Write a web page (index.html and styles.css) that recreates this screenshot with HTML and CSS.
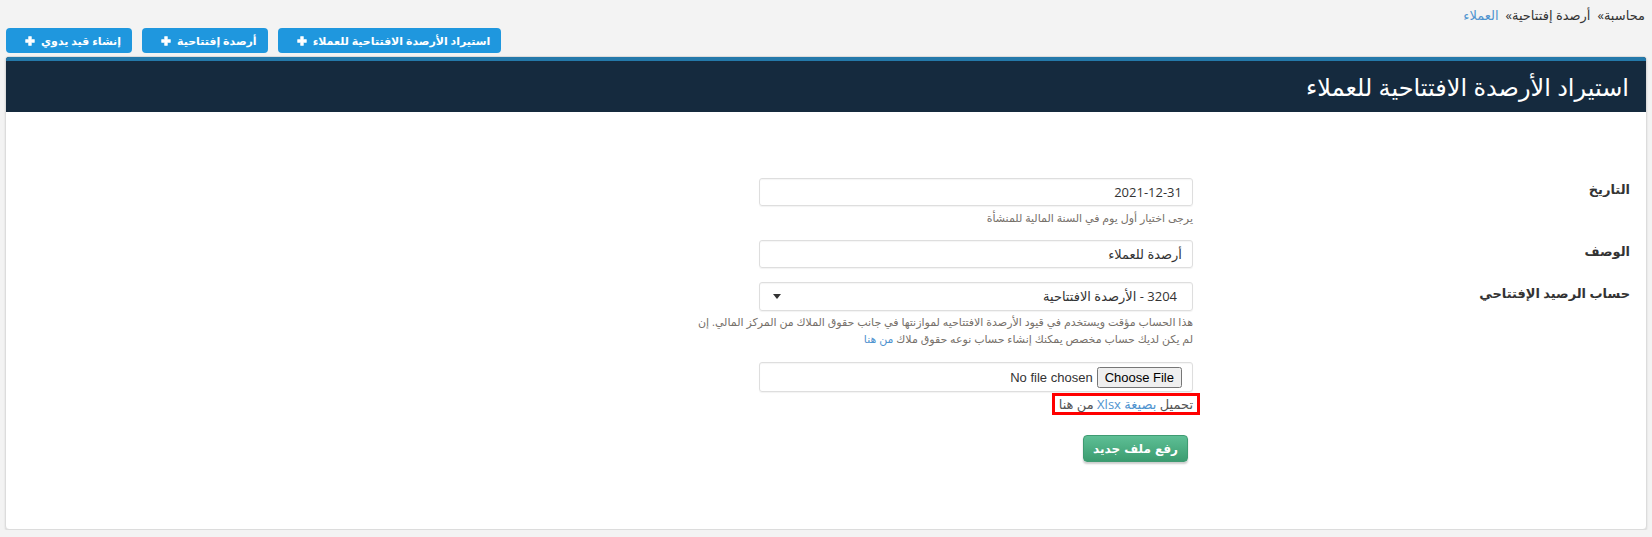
FILE: index.html
```html
<!DOCTYPE html>
<html lang="ar" dir="rtl">
<head>
<meta charset="utf-8">
<title>استيراد الأرصدة الافتتاحية للعملاء</title>
<link rel="stylesheet" href="styles.css">
</head>
<body>
<div class="breadcrumb">
  <span class="crumb">محاسبة»</span>
  <span class="crumb">أرصدة إفتتاحية»</span>
  <a class="crumb link" href="#">العملاء</a>
</div>
<div class="actions">
  <a class="btn-blue" href="#">استيراد الأرصدة الافتتاحية للعملاء <svg class="plus" viewBox="0 0 10 10"><path d="M3.6 0.6h2.8v3h3v2.8h-3v3h-2.8v-3h-3v-2.8h3z" fill="#fff" stroke="#fff" stroke-width="0.6" stroke-linejoin="round"/></svg></a>
  <a class="btn-blue" href="#">أرصدة إفتتاحية <svg class="plus" viewBox="0 0 10 10"><path d="M3.6 0.6h2.8v3h3v2.8h-3v3h-2.8v-3h-3v-2.8h3z" fill="#fff" stroke="#fff" stroke-width="0.6" stroke-linejoin="round"/></svg></a>
  <a class="btn-blue" href="#">إنشاء قيد يدوي <svg class="plus" viewBox="0 0 10 10"><path d="M3.6 0.6h2.8v3h3v2.8h-3v3h-2.8v-3h-3v-2.8h3z" fill="#fff" stroke="#fff" stroke-width="0.6" stroke-linejoin="round"/></svg></a>
</div>
<div class="panel">
  <div class="panel-head">
    <h1 class="panel-title">استيراد الأرصدة الافتتاحية للعملاء</h1>
  </div>
  <div class="panel-body">
    <div class="row row-date">
      <label class="lbl">التاريخ</label>
      <div class="field">
        <div class="input">2021-12-31</div>
        <div class="help">يرجى اختيار أول يوم في السنة المالية للمنشأة</div>
      </div>
    </div>
    <div class="row row-desc">
      <label class="lbl">الوصف</label>
      <div class="field">
        <div class="input">أرصدة للعملاء</div>
      </div>
    </div>
    <div class="row row-acc">
      <label class="lbl">حساب الرصيد الإفتتاحي</label>
      <div class="field">
        <div class="input select"><span>3204 - الأرصدة الافتتاحية</span><span class="caret"></span></div>
        <div class="help help2">هذا الحساب مؤقت ويستخدم في قيود الأرصدة الافتتاحيه لموازنتها في جانب حقوق الملاك من المركز المالي. إن<br>لم يكن لديك حساب مخصص يمكنك إنشاء حساب نوعه حقوق ملاك <a class="link" href="#">من هنا</a></div>
      </div>
    </div>
    <div class="row row-file">
      <div class="field offset">
        <div class="input file"><input type="file" class="file-input"></div>
        <div class="dl"><span class="dl-box">تحميل <a class="link" href="#">بصيغة Xlsx</a> من هنا</span></div>
        <div class="submit-wrap"><button class="btn-green" type="button">رفع ملف جديد</button></div>
      </div>
    </div>
  </div>
</div>
</body>
</html>
```
FILE: styles.css
```css
html { direction: rtl; }
body {
  margin: 0;
  background: #f3f3f3;
  font-family: "Open Sans", "DejaVu Sans", sans-serif;
  color: #333;
  font-size: 13px;
}
a { text-decoration: none; }
.link { color: #4f93cf; }

.breadcrumb {
  height: 28px;
  line-height: 30px;
  padding-right: 7px;
  font-size: 13px;
  color: #333;
  display: flex;
  gap: 7px;
}

.actions {
  display: flex;
  justify-content: flex-end;
  gap: 10px;
  padding-left: 6px;
  height: 25px;
}
.btn-blue {
  display: flex;
  align-items: center;
  gap: 6px;
  height: 25px;
  padding: 0 11px 0 19px;
  background: #1f97de;
  color: #fff;
  font-weight: bold;
  font-size: 11px;
  border-radius: 4px;
  box-sizing: border-box;
}
.plus { width: 10px; height: 10px; }

.panel {
  margin: 3px 5px 0 5px;
  height: 474px;
  background: #fff;
  border: 1px solid #dcdcdc;
  border-radius: 4px;
  box-shadow: 0 1px 2px rgba(0,0,0,0.12);
  overflow: hidden;
  box-sizing: border-box;
}
.panel-head {
  border-top: 4px solid #2479aa;
  background: #152a3e;
  height: 51px;
  display: flex;
  align-items: center;
  padding-right: 17px;
}
.panel-title {
  margin: 0;
  color: #fff;
  font-weight: normal;
  font-size: 24px;
  line-height: 30px;
}

.panel-body {
  padding: 66px 16px 0 0;
}
.row { display: flex; }
.lbl {
  width: 437px;
  flex: none;
  font-weight: bold;
  font-size: 13px;
  line-height: 18px;
  padding-top: 2px;
}
.field { width: 434px; flex: none; }
.field.offset { margin-right: 437px; }

.row-date { margin-bottom: 13px; }
.row-desc { margin-bottom: 14px; }
.row-acc { margin-bottom: 15px; }

.input {
  height: 28px;
  border: 1px solid #dedede;
  border-radius: 3px;
  box-shadow: inset 0 1px 1px rgba(0,0,0,0.04), 0 1px 1px rgba(0,0,0,0.05);
  box-sizing: border-box;
  padding: 0 10px;
  line-height: 26px;
  font-size: 13px;
  color: #333;
}
.select {
  height: 29px;
  line-height: 27px;
  display: flex;
  justify-content: space-between;
  align-items: center;
  padding: 0 15px 0 13px;
}
.caret {
  width: 0;
  height: 0;
  border-left: 4px solid transparent;
  border-right: 4px solid transparent;
  border-top: 5px solid #333;
}
.help {
  margin-top: 3px;
  font-size: 11px;
  line-height: 18px;
  color: #76706a;
  white-space: nowrap;
}
.help2 { margin-top: 2px; line-height: 17px; }

.file {
  height: 30px;
  padding: 4px 10px 0 10px;
  line-height: normal;
}
.file-input {
  font-family: "Liberation Sans", "DejaVu Sans", sans-serif;
  font-size: 13px;
  color: #333;
  direction: rtl;
}
.dl { margin-right: -7px; margin-top: 1px; height: 22px; }
.dl-box {
  display: inline-block;
  height: 22px;
  box-sizing: border-box;
  border: 3px solid #f00;
  padding: 0 4px;
  line-height: 16px;
  font-size: 13px;
  color: #555;
}
.submit-wrap { margin-top: 20px; padding-right: 5px; }
.btn-green {
  width: 105px;
  height: 27px;
  border: 1px solid #3f9b72;
  border-radius: 4px;
  background: linear-gradient(#5ebf95, #3b9c70);
  color: #fff;
  font-family: "DejaVu Sans", sans-serif;
  font-weight: bold;
  font-size: 12px;
  box-shadow: 0 2px 2px rgba(0,0,0,0.2);
  padding: 0;
}
```
